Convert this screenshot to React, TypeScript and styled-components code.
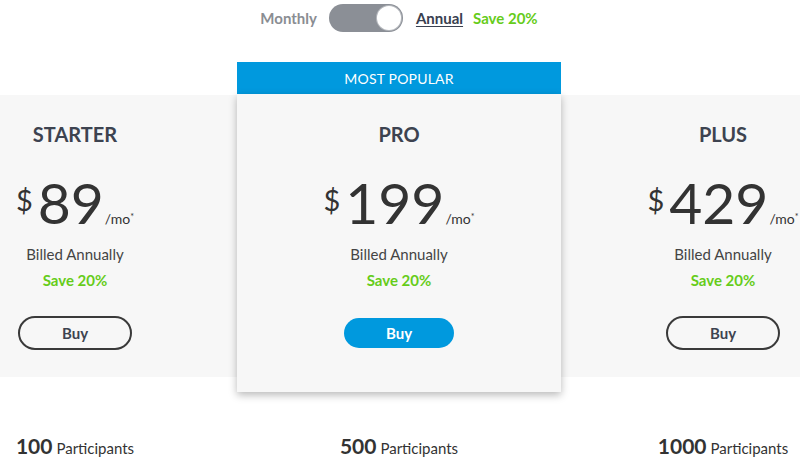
import React from "react";
import styled, { createGlobalStyle } from "styled-components";

const blue = "#0099de";
const green = "#66cc1a";
const ink = "#333";

const GlobalStyle = createGlobalStyle`
  body {
    margin: 0;
    background: #fff;
    font-family: Lato, "Open Sans", sans-serif;
    color: ${ink};
    overflow: hidden;
  }
`

const Page = styled.main`
  width: 800px;
  height: 466px;
  padding-top: 4px;
  box-sizing: border-box;
`

const ToggleRow = styled.div`
  display: flex;
  justify-content: center;
  align-items: center;
  gap: 12px;
  height: 28px;
  font-size: 15px;
  font-weight: 700;
  padding-right: 2px;
`

const Label = styled.span<{ $active?: boolean }>`
  color: ${p => (p.$active ? "#394050" : "#8a8d92")};
  text-decoration: ${p => (p.$active ? "underline" : "none")};
  text-underline-offset: 2px;
`

const Switch = styled.div`
  width: 74px;
  height: 28px;
  border-radius: 14px;
  background: #8b8f96;
  display: flex;
  justify-content: flex-end;
  align-items: center;
  padding: 2px;
  box-sizing: border-box;
  margin-right: 1px;
`

const Knob = styled.div`
  width: 24px;
  height: 24px;
  border-radius: 50%;
  background: #fff;
  box-shadow: 0 0 0 1px #b5b8bd;
`

const Save = styled.span`
  color: ${green};
  font-weight: 700;
  margin-left: -2px;
`

const Plans = styled.div`
  display: flex;
  justify-content: center;
  align-items: flex-start;
  margin-top: 30px;
  padding-right: 2px;
`

const Column = styled.section`
  flex: 0 0 324px;
  display: flex;
  flex-direction: column;
`

const Banner = styled.div`
  height: 32px;
  background: ${blue};
  color: #fff;
  font-size: 14px;
  display: flex;
  align-items: center;
  justify-content: center;
  letter-spacing: 0.2px;
`

const Card = styled.div<{ $featured?: boolean }>`
  margin-top: ${p => (p.$featured ? "0" : "33px")};
  height: ${p => (p.$featured ? "298px" : "282px")};
  background: #f7f7f7;
  display: flex;
  flex-direction: column;
  align-items: center;
  padding-top: ${p => (p.$featured ? "28px" : "27px")};
  box-sizing: border-box;
  position: relative;
  z-index: ${p => (p.$featured ? 1 : 0)};
  box-shadow: ${p => (p.$featured ? "0 3px 8px rgba(0,0,0,0.28)" : "none")};
`

const Title = styled.h2`
  margin: 0;
  font-size: 20px;
  line-height: 24px;
  font-weight: 700;
  color: #3d4350;
`

const Price = styled.div`
  margin-top: 26px;
  display: flex;
  align-items: baseline;
  line-height: 60px;
  height: 60px;
  color: ${ink};
`

const Dollar = styled.span`
  font-size: 29px;
  align-self: flex-start;
  line-height: 30px;
  margin-top: 13px;
  margin-right: 5px;
`

const Amount = styled.span`
  font-size: 57px;
`

const Per = styled.span`
  font-size: 14px;
  margin-left: 1px;
  sup {
    font-size: 9px;
    vertical-align: 4px;
  }
`

const Billed = styled.div`
  margin-top: 12px;
  font-size: 15px;
  line-height: 20px;
  color: #444;
`

const Saving = styled.div`
  margin-top: 6px;
  font-size: 15px;
  line-height: 20px;
  font-weight: 700;
  color: ${green};
`

const BuyButton = styled.button<{ $featured?: boolean }>`
  margin-top: ${p => (p.$featured ? "28px" : "26px")};
  width: ${p => (p.$featured ? "110px" : "114px")};
  height: ${p => (p.$featured ? "30px" : "34px")};
  border-radius: 17px;
  border: ${p => (p.$featured ? "none" : "2px solid #3a3a3a")};
  background: ${p => (p.$featured ? blue : "transparent")};
  color: ${p => (p.$featured ? "#fff" : "#3d4350")};
  font-family: inherit;
  font-size: 15px;
  font-weight: 700;
  cursor: pointer;
`

const Participants = styled.div`
  display: flex;
  justify-content: center;
  margin-top: 41px;
  padding-right: 2px;
`

const Count = styled.div`
  flex: 0 0 324px;
  text-align: center;
  font-size: 15px;
  color: ${ink};
  b {
    font-size: 21px;
    font-weight: 700;
    margin-right: 4px;
  }
`

const plans = [
  { name: "STARTER", price: "89", people: "100" },
  { name: "PRO", price: "199", people: "500", featured: true },
  { name: "PLUS", price: "429", people: "1000" },
];

export default function App() {
  return (
    <Page>
      <GlobalStyle />
      <ToggleRow>
        <Label>Monthly</Label>
        <Switch>
          <Knob />
        </Switch>
        <Label $active>Annual</Label>
        <Save>Save 20%</Save>
      </ToggleRow>

      <Plans>
        {plans.map(plan => (
          <Column key={plan.name}>
            {plan.featured && <Banner>MOST POPULAR</Banner>}
            <Card $featured={plan.featured}>
              <Title>{plan.name}</Title>
              <Price>
                <Dollar>$</Dollar>
                <Amount>{plan.price}</Amount>
                <Per>/mo<sup>*</sup></Per>
              </Price>
              <Billed>Billed Annually</Billed>
              <Saving>Save 20%</Saving>
              <BuyButton $featured={plan.featured}>Buy</BuyButton>
            </Card>
          </Column>
        ))}
      </Plans>

      <Participants>
        {plans.map(plan => (
          <Count key={plan.name}>
            <b>{plan.people}</b>Participants
          </Count>
        ))}
      </Participants>
    </Page>
  );
}
